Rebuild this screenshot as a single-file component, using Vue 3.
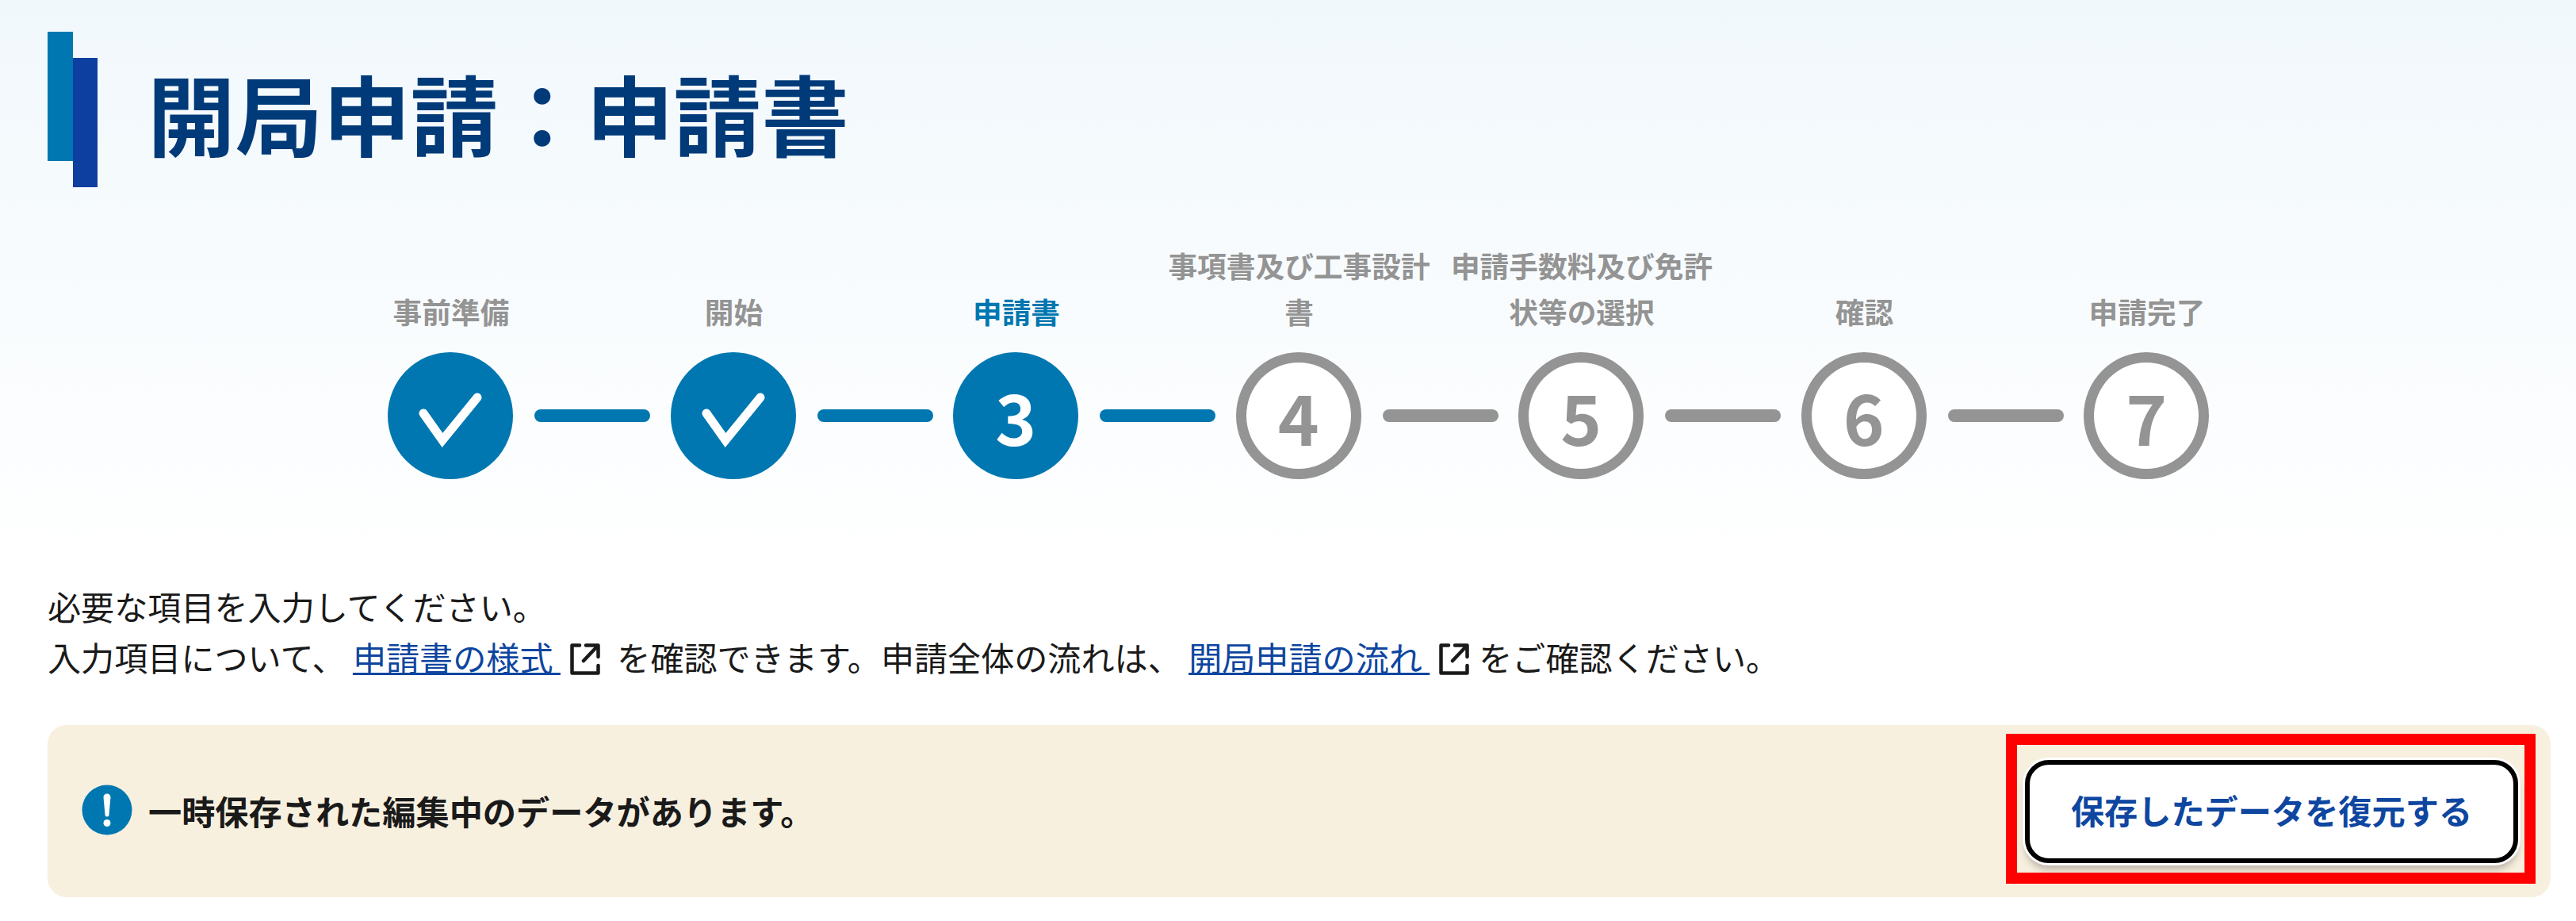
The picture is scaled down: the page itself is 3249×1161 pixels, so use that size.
<script setup>
const steps = [
  { label: "事前準備", state: "done" },
  { label: "開始", state: "done" },
  { label: "申請書", state: "current", num: 3 },
  { label: "事項書及び工事設計書", state: "todo", num: 4 },
  { label: "申請手数料及び免許状等の選択", state: "todo", num: 5 },
  { label: "確認", state: "todo", num: 6 },
  { label: "申請完了", state: "todo", num: 7 },
];
</script>

<template>
  <div class="page">
    <div class="title-row">
      <div class="bars">
        <span class="bar bar-a"></span>
        <span class="bar bar-b"></span>
      </div>
      <h1>開局申請：申請書</h1>
    </div>

    <ol class="steps">
      <li v-for="(step, index) in steps" :key="index" class="step" :class="step.state">
        <div class="step-label">{{ step.label }}</div>
        <div class="track">
          <div class="circle">
            <svg v-if="step.state === 'done'" class="check" viewBox="0 0 158 158">
              <path d="M45 76 L69 110 L113 56" />
            </svg>
            <template v-else>{{ step.num }}</template>
          </div>
          <div v-if="index < steps.length - 1" class="line" :class="{ on: index < 3 }"></div>
        </div>
      </li>
    </ol>

    <div class="lead">
      <p>必要な項目を入力してください。</p>
      <p>
        入力項目について、 <a href="#">申請書の様式 </a><svg class="ext" viewBox="0 0 38 40"><path d="M12 2.5H2.5v35h33V28M17 22L35 3M20 2.5h15.5V17" /></svg> を確認できます。申請全体の流れは、 <a href="#">開局申請の流れ </a><svg class="ext" viewBox="0 0 38 40"><path d="M12 2.5H2.5v35h33V28M17 22L35 3M20 2.5h15.5V17" /></svg>をご確認ください。
      </p>
    </div>

    <div class="notice">
      <div class="notice-text">
        <svg class="info" viewBox="0 0 64 64">
          <circle cx="32" cy="32" r="31.5" fill="#0077b0" />
          <path d="M27.5 16a4.5 4.5 0 0 1 9 0l-2 22a2.5 2.5 0 0 1-5 0z" fill="#fff" />
          <circle cx="32" cy="48.5" r="4.5" fill="#fff" />
        </svg>
        <span>一時保存された編集中のデータがあります。</span>
      </div>
      <div class="highlight">
        <button type="button" class="restore">保存したデータを復元する</button>
      </div>
    </div>
  </div>
</template>

<style scoped>
.page {
  box-sizing: border-box;
  min-height: 1161px;
  padding: 40px 32px 30px 60px;
  background: linear-gradient(180deg, #f1f8fc 0, #ffffff 720px);
  font-family: "Noto Sans CJK JP", "Noto Sans", sans-serif;
  color: #1a1a1a;
}

.title-row {
  display: flex;
  align-items: flex-start;
  gap: 63px;
}
.bars {
  display: flex;
  flex-shrink: 0;
}
.bar {
  display: block;
  width: 32px;
  height: 163px;
}
.bar-a {
  background: #0077b0;
}
.bar-b {
  margin-top: 33px;
  width: 31px;
  background: #0d3fa0;
}
h1 {
  margin: 26px 0 0;
  font-size: 110.6px;
  line-height: 150px;
  font-weight: 700;
  color: #003a78;
}

.steps {
  display: grid;
  grid-template-columns: repeat(7, 356.5px);
  justify-content: center;
  margin: 69px 0 0;
  padding: 0;
  list-style: none;
}
.step {
  display: flex;
  flex-direction: column;
  justify-content: flex-end;
  min-width: 0;
}
.step-label {
  padding-bottom: 23px;
  font-size: 36.7px;
  line-height: 58px;
  font-weight: 700;
  text-align: center;
  color: #949494;
}
.current .step-label {
  color: #0077b0;
}
.track {
  display: flex;
  align-items: center;
  padding-left: 98.5px;
}
.circle {
  box-sizing: border-box;
  display: flex;
  flex-shrink: 0;
  align-items: center;
  justify-content: center;
  width: 158px;
  height: 160px;
  border: 13px solid #949494;
  border-radius: 50%;
  background: #fff;
  font-size: 88px;
  line-height: 1;
  font-weight: 700;
  color: #949494;
}
.done .circle,
.current .circle {
  border-color: #0077b0;
  background: #0077b0;
  color: #fff;
}
.check {
  flex-shrink: 0;
  width: 158px;
  height: 158px;
}
.check path {
  fill: none;
  stroke: #fff;
  stroke-width: 11;
  stroke-linecap: round;
}
.line {
  flex-shrink: 0;
  width: 146px;
  height: 16px;
  margin-left: 27px;
  border-radius: 8px;
  background: #949494;
}
.line.on {
  background: #0077b0;
}

.lead {
  margin-top: 128px;
  font-size: 42.1px;
  line-height: 64px;
}
.lead p {
  margin: 0;
}
.lead a {
  color: #0e46a0;
  text-decoration: underline;
  text-decoration-thickness: 3px;
}
.ext {
  display: inline-block;
  width: 38px;
  height: 40px;
  margin-left: 12px;
  margin-right: 12px;
  vertical-align: -5px;
}
.ext path {
  fill: none;
  stroke: #1a1a1a;
  stroke-width: 4.5;
  stroke-linecap: round;
  stroke-linejoin: round;
}

.notice {
  display: flex;
  align-items: center;
  justify-content: space-between;
  margin-top: 54px;
  padding: 11px 19px 17px 43px;
  border-radius: 24px;
  background: #f8f0df;
}
.notice-text {
  display: flex;
  align-items: center;
  gap: 20px;
  padding-top: 3px;
  font-size: 42.2px;
  font-weight: 700;
}
.info {
  flex-shrink: 0;
  width: 64px;
  height: 64px;
}
.highlight {
  padding: 19px 8px 12px 10px;
  border: 14px solid #ff0000;
}
.restore {
  display: block;
  width: 622px;
  height: 130px;
  padding: 0 0 6px;
  border: 6px solid #000;
  border-radius: 30px;
  background: #fff;
  box-shadow: 0 0 0 3px #fff, 0 8px 10px rgba(0, 0, 0, 0.25);
  font-family: inherit;
  font-size: 42.2px;
  font-weight: 700;
  color: #0e46a0;
}
</style>
